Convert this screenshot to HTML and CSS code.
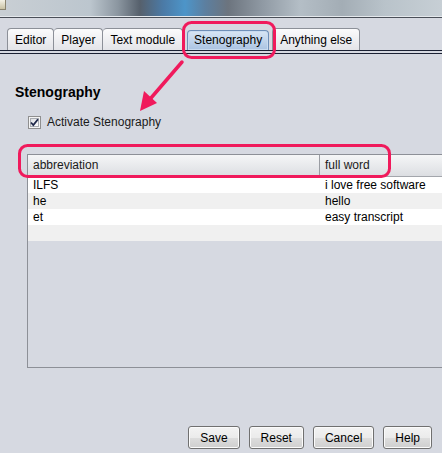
FILE: index.html
```html
<!DOCTYPE html>
<html lang="en">
<head>
    <meta charset="UTF-8">
    <meta name="viewport" content="width=device-width, initial-scale=1.0">
    <title>Settings</title>
    <link rel="stylesheet" href="styles.css">
</head>
<body>

    <div class="desktop"><span class="app-icon"></span></div>

    <div class="tabbar">
        <div class="tab">Editor</div>
        <div class="tab">Player</div>
        <div class="tab">Text module</div>
        <div class="tab selected">Stenography</div>
        <div class="tab">Anything else</div>
    </div>

    <div class="panel">
        <h2 class="title">Stenography</h2>

        <label class="check">
            <svg width="13" height="13" viewBox="0 0 13 13">
                <defs>
                    <linearGradient id="boxFill" x1="0" y1="0" x2="1" y2="1">
                        <stop offset="0" stop-color="#dcdee2"/>
                        <stop offset="1" stop-color="#ffffff"/>
                    </linearGradient>
                </defs>
                <rect x="0.5" y="0.5" width="12" height="12" fill="#f4f4f4" stroke="#8f8f8f"/>
                <rect x="2.5" y="2.5" width="8" height="8" fill="url(#boxFill)" stroke="#a9acb2"/>
                <path d="M3 6.5 L5.3 9 L10 3.2" fill="none" stroke="#20294a" stroke-width="1.8"/>
            </svg>
            Activate Stenography
        </label>

        <div class="table">
            <div class="row head">
                <div class="cell first">abbreviation</div>
                <div class="cell">full word</div>
            </div>
            <div class="row">
                <div class="cell first">ILFS</div>
                <div class="cell">i love free software</div>
            </div>
            <div class="row odd">
                <div class="cell first">he</div>
                <div class="cell">hello</div>
            </div>
            <div class="row">
                <div class="cell first">et</div>
                <div class="cell">easy transcript</div>
            </div>
            <div class="row odd">
                <div class="cell first"></div>
                <div class="cell"></div>
            </div>
        </div>

        <div class="buttons">
            <button class="btn">Save</button>
            <button class="btn">Reset</button>
            <button class="btn">Cancel</button>
            <button class="btn">Help</button>
        </div>
    </div>

    <!-- pink callouts drawn over the dialog -->
    <svg class="marks" width="442" height="453" viewBox="0 0 442 453">
        <rect x="183.5" y="22.5" width="91" height="35" rx="8" fill="none" stroke="#f01a5c" stroke-width="3"/>
        <rect x="19.5" y="145.5" width="370" height="31" rx="8" fill="none" stroke="#f01a5c" stroke-width="3"/>
        <line x1="182" y1="62" x2="151" y2="98" stroke="#f01a5c" stroke-width="3.5" stroke-linecap="round"/>
        <polygon points="140,111 157,103 144,91" fill="#f01a5c"/>
    </svg>

</body>
</html>
```

FILE: styles.css
```css
body {
    margin: 0;
    width: 442px;
    height: 453px;
    overflow: hidden;
    position: relative;
    display: flex;
    flex-direction: column;
    background: #d6d9e1;
    font-family: "Liberation Sans", Arial, sans-serif;
    font-size: 12px;
    color: #000;
}

/* strip of blurred desktop above the window */
.desktop {
    height: 16px;
    flex-shrink: 0;
    background: linear-gradient(90deg,
        #c9cfd4 0, #bcc6ce 90px, #8b96a0 118px, #56606c 140px,
        #4b7aa6 163px, #4d95c9 185px, #5c7fa0 205px, #6c747e 228px,
        #8f99a3 262px, #b4bec6 300px, #a3adb5 342px, #b9c3ca 385px, #c7cfd5 442px);
    border-bottom: 1px solid #e4e8ec;
    box-shadow: 0 1px 0 #4a4f58;
    margin-bottom: 1px;
}

.app-icon {
    display: block;
    width: 5px;
    height: 9px;
    background: linear-gradient(#f4f2e6, #c9c2a4);
    border-right: 1px solid #8a8470;
    border-bottom: 1px solid #8a8470;
}

.tabbar {
    display: flex;
    align-items: flex-end;
    padding: 10px 0 0 7px;
    border-bottom: 1px solid #1b2133;
    flex-shrink: 0;
}

.tab {
    height: 22px;
    line-height: 22px;
    padding: 0 7px;
    border: 1px solid #8c9098;
    border-bottom: none;
    border-radius: 4px 4px 0 0;
    background: linear-gradient(#fbfbfc, #e3e4e8);
    box-sizing: border-box;
}

.tab + .tab {
    border-left: none;
}

.tab.selected {
    height: 20px;
    line-height: 19px;
    margin: 0 3px 0 4px;
    padding: 0 6px;
    border: 1px solid #6f8fb8;
    border-bottom: none;
    background: linear-gradient(#d8e5f4, #aac3e2);
    box-shadow: inset 0 0 0 1px #c9dbf0;
}

.tab.selected + .tab {
    border-left: 1px solid #8c9098;
}

.panel {
    flex: 1;
    display: flex;
    flex-direction: column;
    margin-top: 2px;
    border-top: 1px solid #1b2133;
    padding-left: 15px;
}

.title {
    margin: 30px 0 0;
    font-size: 14px;
    line-height: 16px;
    font-weight: bold;
}

.check {
    display: flex;
    align-items: center;
    gap: 6px;
    height: 14px;
    margin: 15px 0 0 13px;
    color: #1a1a1a;
}

/* table runs on under the right edge of the window, so no right border */
.table {
    margin: 25px 0 0 12px;
    width: 415px;
    height: 214px;
    box-sizing: border-box;
    border: 1px solid #8d9097;
    border-right: none;
    overflow: hidden;
}

.row {
    display: flex;
    height: 16px;
    line-height: 16px;
    background: #ffffff;
}

.row.odd {
    background: #f0f0f0;
}

.row.head {
    height: 22px;
    line-height: 21px;
    background: linear-gradient(#f5f6f7, #dcdee2);
    border-bottom: 1px solid #a3a6ac;
    box-sizing: border-box;
    color: #1a1a1a;
}

.cell {
    padding-left: 5px;
    white-space: nowrap;
}

.cell.first {
    width: 292px;
    flex-shrink: 0;
    box-sizing: border-box;
}

.head .cell.first {
    border-right: 1px solid #9a9da3;
}

.buttons {
    margin-top: auto;
    display: flex;
    justify-content: flex-end;
    gap: 9px;
    padding: 0 10px 4px 0;
}

.btn {
    height: 23px;
    padding: 0 11px;
    font-family: inherit;
    font-size: 12px;
    color: #000;
    border: 1px solid #707070;
    border-radius: 3px;
    background: linear-gradient(#f3f3f3 0, #ebebeb 50%, #dddddd 51%, #cfcfcf 100%);
    box-shadow: inset 0 0 0 1px #fbfbfb;
}

.marks {
    position: absolute;
    top: 0;
    left: 0;
    pointer-events: none;
}
```
